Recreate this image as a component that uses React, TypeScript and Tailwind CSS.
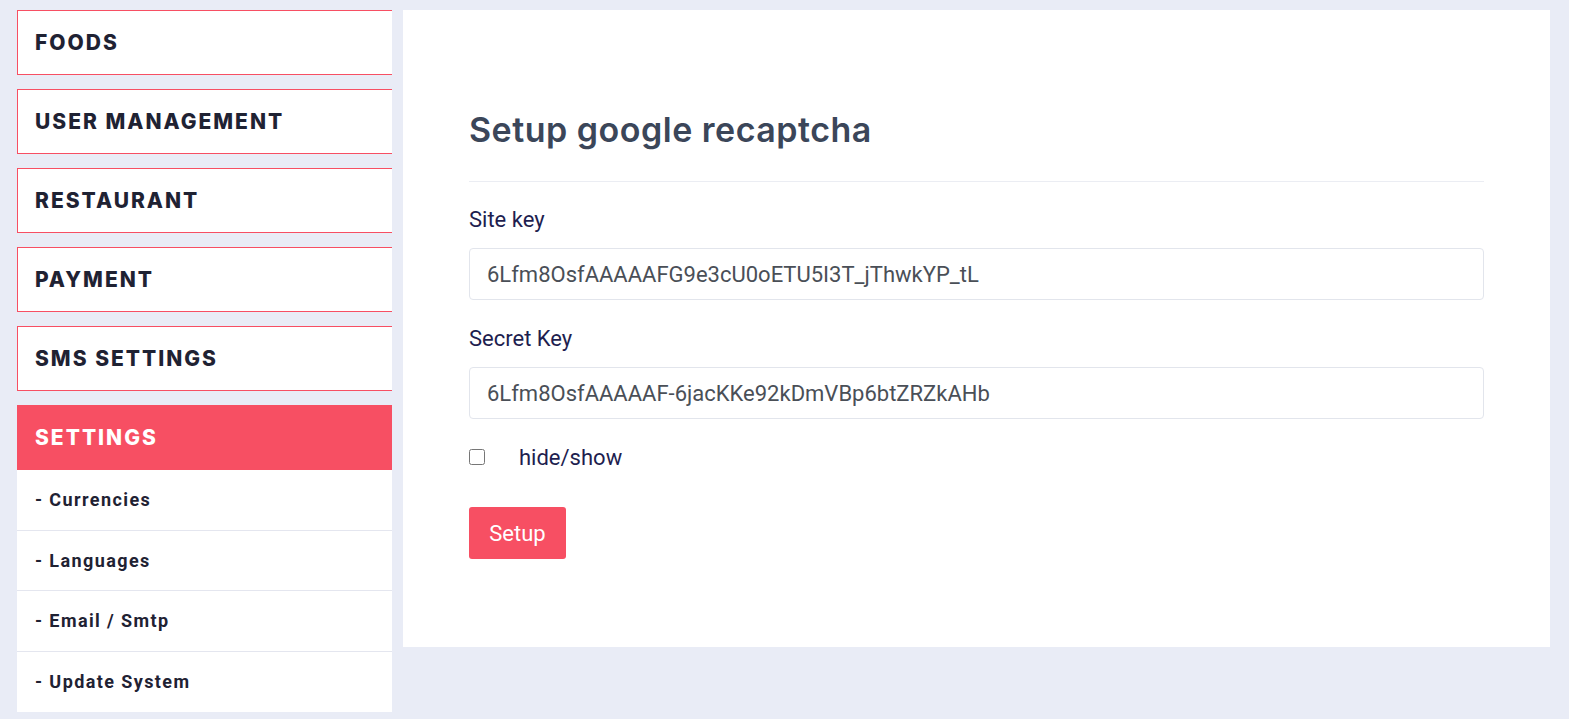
import { useState } from 'react';

const menu = ['FOODS', 'USER MANAGEMENT', 'RESTAURANT', 'PAYMENT', 'SMS SETTINGS'];
const subMenu = ['- Currencies', '- Languages', '- Email / Smtp', '- Update System'];

export default function App() {
    const [show, setShow] = useState(false);

    return (
        <div className="min-h-screen bg-[#e9ecf6] pt-[10px] pl-[17px] pr-[19px] flex gap-[11px] items-start">
            {/* Sidebar */}
            <aside className="w-[375px] shrink-0 flex flex-col">
                {menu.map((item) => (
                    <div
                        key={item}
                        className="h-[65px] mb-[14px] bg-white border-l border-y border-[#f74f63] flex items-center pl-[17px] font-['Inter',sans-serif] text-[21px] font-extrabold tracking-[2px] text-[#1f2233]"
                    >
                        {item}
                    </div>
                ))}
                <div className="h-[65px] bg-[#f74f63] flex items-center pl-[18px] font-['Inter',sans-serif] text-[21px] font-extrabold tracking-[2px] text-white">
                    SETTINGS
                </div>
                <div className="bg-white">
                    {subMenu.map((item, i) => (
                        <div
                            key={item}
                            className={`h-[60.5px] flex items-center pl-[18px] font-['Roboto',sans-serif] text-[18px] font-bold tracking-[1.4px] text-[#1f2233] ${i < subMenu.length - 1 ? 'border-b border-[#e4e6ef]' : ''}`}
                        >
                            {item}
                        </div>
                    ))}
                </div>
            </aside>

            {/* Content */}
            <main className="flex-1 bg-white h-[637px] pt-[96px] px-[66px] font-['Roboto',sans-serif]">
                <h2 className="font-['Inter',sans-serif] text-[34px] leading-[48px] font-semibold tracking-[0.5px] text-[#3b4659]">
                    Setup google recaptcha
                </h2>
                <div className="mt-[27px] border-t border-[#ebedf3]" />

                <label className="block mt-[23px] text-[22px] leading-[30px] text-[#1e1e4f]">Site key</label>
                <input
                    type="text"
                    readOnly
                    value="6Lfm8OsfAAAAAFG9e3cU0oETU5I3T_jThwkYP_tL"
                    className="mt-[13px] w-full h-[52px] border border-[#e2e5ec] rounded-[4px] px-[17px] text-[22px] text-[#4a4f57] outline-none"
                />

                <label className="block mt-[24px] text-[22px] leading-[30px] text-[#1e1e4f]">Secret Key</label>
                <input
                    type="text"
                    readOnly
                    value="6Lfm8OsfAAAAAF-6jacKKe92kDmVBp6btZRZkAHb"
                    className="mt-[13px] w-full h-[52px] border border-[#e2e5ec] rounded-[4px] px-[17px] text-[22px] text-[#4a4f57] outline-none"
                />

                <div className="mt-[23px] h-[30px] flex items-center">
                    <input
                        type="checkbox"
                        checked={show}
                        onChange={(e) => setShow(e.target.checked)}
                        className="w-[16px] h-[16px] m-0"
                    />
                    <span className="ml-[34px] text-[22px] text-[#1e1e4f]">hide/show</span>
                </div>

                <button className="mt-[35px] h-[52px] w-[97px] bg-[#f74f63] rounded-[3px] text-white text-[22px]">
                    Setup
                </button>
            </main>
        </div>
    );
}
